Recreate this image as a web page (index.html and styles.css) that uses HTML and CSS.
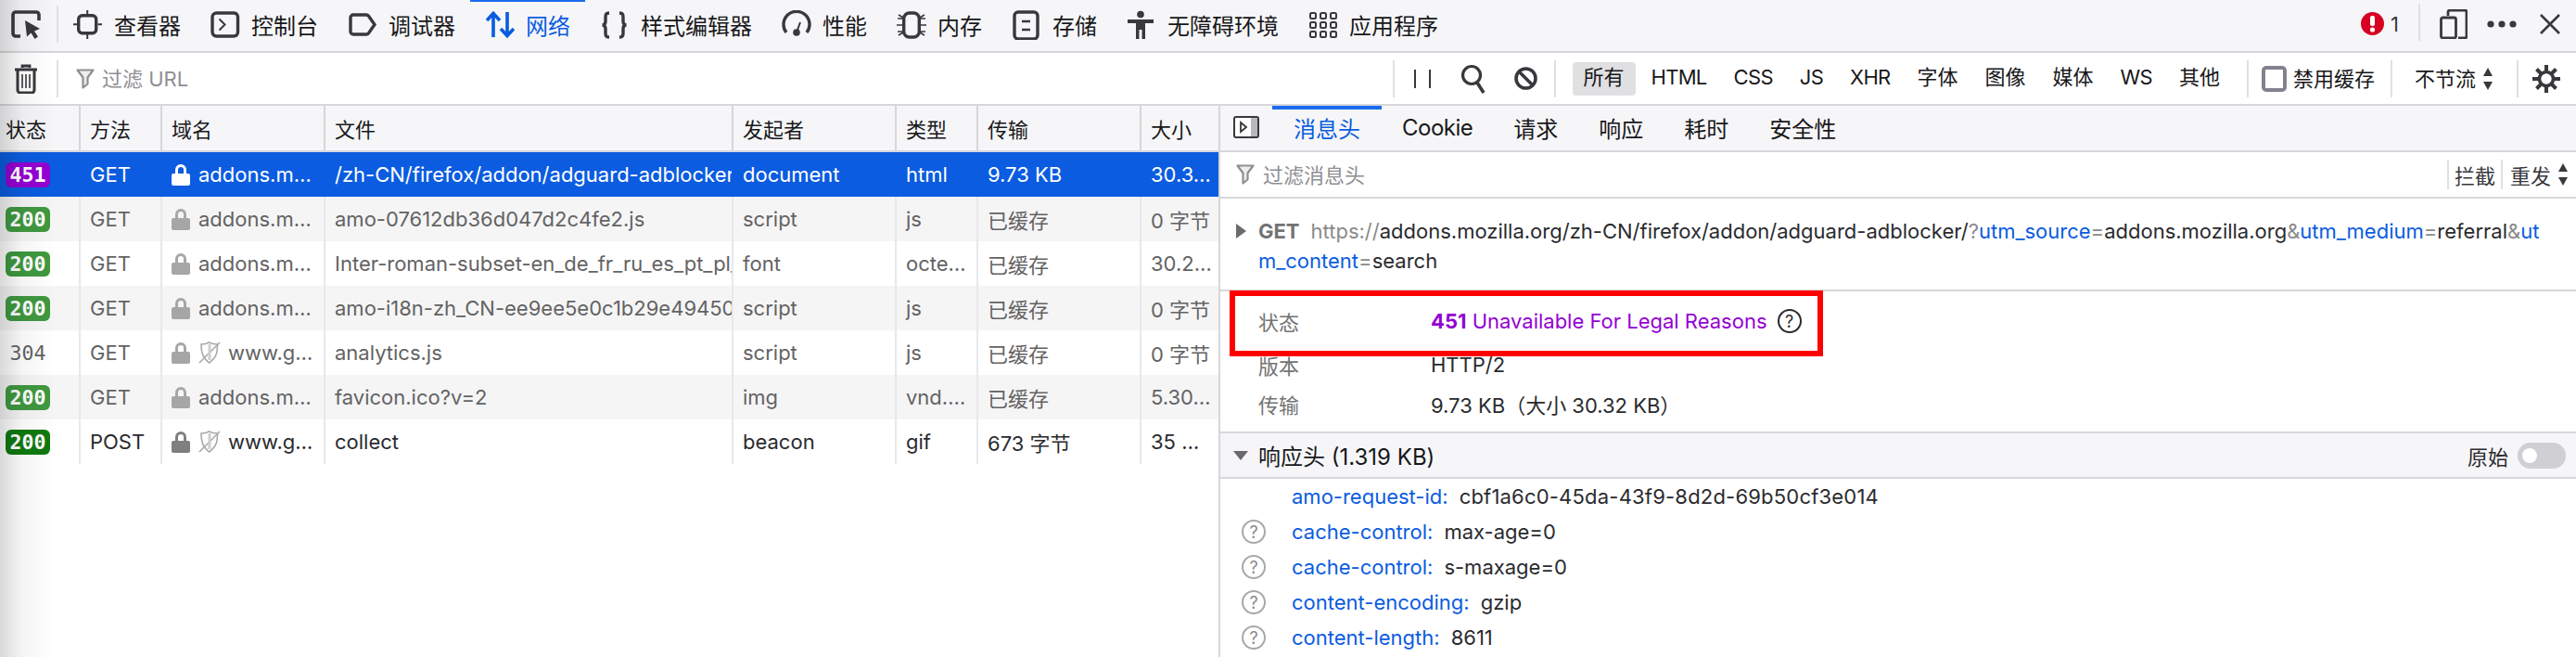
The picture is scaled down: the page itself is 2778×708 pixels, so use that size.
FILE: index.html
```html
<!DOCTYPE html>
<html lang="zh-CN">
<head>
<meta charset="utf-8">
<title>网络</title>
<link rel="stylesheet" href="styles.css">
</head>
<body>
<svg class="defs" aria-hidden="true">
  <symbol id="funnel" viewBox="0 0 20 22"><path d="M1.500 1.500h17l-6 8v7l-5 4v-11z" fill="#eeeeef" stroke="#8f8f93" stroke-width="2.200" stroke-linejoin="round"/></symbol>
  <symbol id="lock" viewBox="0 0 20 24"><path d="M2 11h16a2 2 0 0 1 2 2v9a2 2 0 0 1-2 2H2a2 2 0 0 1-2-2v-9a2 2 0 0 1 2-2zM4 11V7a6 6 0 0 1 12 0v4h-3V7a3 3 0 0 0-6 0v4z" fill="currentColor"/></symbol>
  <symbol id="shield" viewBox="0 0 24 24"><path d="M3 3c4 0 6-.5 8.500-2 2.500 1.500 5 2 9 2 0 8-.5 14-9 20C4 17 3 11 3 3z" fill="none" stroke="#a9a9a9" stroke-width="1.600"/><path d="M1 23L23 1" stroke="#a9a9a9" stroke-width="1.600"/><path d="M12 3v17" stroke="#cfcfcf" stroke-width="3"/></symbol>
  <symbol id="updown" viewBox="0 0 12 26"><path d="M6 1l5 9H1zM6 25l-5-9h10z" fill="#38383d"/></symbol>
</svg>

<div class="shade"></div>

<header class="bar top">
  <div class="picker">
    <svg class="ic32" viewBox="0 0 32 32"><path d="M10 29H5a3 3 0 0 1-3-3V6a3 3 0 0 1 3-3h22a3 3 0 0 1 3 3v6" fill="none" stroke="#38383d" stroke-width="3.600"/><path d="M15 12l16 9-6 2.500 4 6-3.500 2.500-4-6.500-4.500 4z" fill="#38383d"/></svg>
  </div>
  <span class="sep"></span>
  <nav class="tabs">
    <a class="tab"><svg class="ic32" viewBox="0 0 32 32"><rect x="5.700" y="5.700" width="19" height="19" rx="4" fill="none" stroke="#38383d" stroke-width="3.400"/><path d="M15.200 0v4M15.200 26v5M0 15.200h4M26.400 15.200H31" stroke="#38383d" stroke-width="2"/></svg>查看器</a>
    <a class="tab"><svg class="ic32" viewBox="0 0 32 32"><rect x="2" y="3" width="27.500" height="25" rx="4.500" fill="none" stroke="#38383d" stroke-width="3.400"/><path d="M9.500 9.500l6 6-6 6" fill="none" stroke="#38383d" stroke-width="2"/></svg>控制台</a>
    <a class="tab"><svg class="ic32" viewBox="0 0 32 32"><path d="M6 5h14a3 3 0 0 1 2.500 1.200L29 15.500l-6.500 9.300A3 3 0 0 1 20 26H6a3 3 0 0 1-3-3V8a3 3 0 0 1 3-3z" fill="none" stroke="#38383d" stroke-width="3.400"/></svg>调试器</a>
    <a class="tab on"><svg class="ic32" viewBox="0 0 32 32"><path d="M9 29V4M2 11l7-7.500 7 7.500M24 2v25M17 20l7 7.500 7-7.500" fill="none" stroke="#0a5ce0" stroke-width="3.600"/></svg>网络</a>
    <a class="tab"><svg class="ic32" viewBox="0 0 32 32"><path d="M10 3C6 3 6 5 6 8v4c0 2-1 4-3.500 4 2.500 0 3.500 2 3.500 4v4c0 3 0 5 4 5M21 3c4 0 4 2 4 5v4c0 2 1 4 3.500 4-2.500 0-3.500 2-3.500 4v4c0 3 0 5-4 5" fill="none" stroke="#38383d" stroke-width="3.400"/></svg>样式编辑器</a>
    <a class="tab"><svg class="ic32" viewBox="0 0 32 32"><path d="M5 24A14 14 0 1 1 27 24" fill="none" stroke="#38383d" stroke-width="3.400"/><circle cx="16" cy="24" r="3.800" fill="#38383d"/><path d="M16 24l4-11" stroke="#38383d" stroke-width="2"/></svg>性能</a>
    <a class="tab"><svg class="ic32" viewBox="0 0 32 32"><rect x="7.700" y="3" width="16.600" height="26" rx="6" fill="none" stroke="#38383d" stroke-width="3.400"/><path d="M1 9h6M0 16h7M1 23h6M25 9h6M25 16h7M25 23h6M2 5l5 3M2 27l5-3M30 5l-5 3M30 27l-5-3" stroke="#38383d" stroke-width="1.600"/></svg>内存</a>
    <a class="tab"><svg class="ic32" viewBox="0 0 32 32"><rect x="3" y="2" width="25" height="29" rx="4" fill="none" stroke="#38383d" stroke-width="3.400"/><path d="M11 12h9M11 21h9" stroke="#38383d" stroke-width="2.400"/></svg>存储</a>
    <a class="tab"><svg class="ic32" viewBox="0 0 32 32"><circle cx="15" cy="4.500" r="3.800" fill="#38383d"/><path d="M1 10h28v4h-9v17h-3.500v-10h-3v10H10V14H1z" fill="#38383d"/></svg>无障碍环境</a>
    <a class="tab"><svg class="ic32" viewBox="0 0 32 32"><g fill="none" stroke="#38383d" stroke-width="2"><rect x="2" y="3" width="6" height="6" rx="1.500"/><rect x="13" y="3" width="6" height="6" rx="1.500"/><rect x="24" y="3" width="6" height="6" rx="1.500"/><rect x="2" y="13" width="6" height="6" rx="1.500"/><rect x="13" y="13" width="6" height="6" rx="1.500"/><rect x="24" y="13" width="6" height="6" rx="1.500"/><rect x="2" y="23" width="6" height="6" rx="1.500"/><rect x="13" y="23" width="6" height="6" rx="1.500"/><rect x="24" y="23" width="6" height="6" rx="1.500"/></g></svg>应用程序</a>
  </nav>
  <div class="top-end">
    <svg class="err" viewBox="0 0 25 25"><circle cx="12.500" cy="12.500" r="12.500" fill="#d70022"/><rect x="10" y="4" width="5" height="11" rx="2" fill="#fff"/><circle cx="12.500" cy="19" r="2.600" fill="#fff"/></svg>
    <span class="errnum">1</span>
    <span class="sep"></span>
    <svg class="dev" viewBox="0 0 30 32"><path d="M9 7V3a2 2 0 0 1 2-2h16a2 2 0 0 1 2 2v26a2 2 0 0 1-2 2h-7" fill="none" stroke="#38383d" stroke-width="2.800"/><rect x="1.500" y="9" width="16" height="22" rx="2" fill="none" stroke="#38383d" stroke-width="2.800"/></svg>
    <svg class="dots" viewBox="0 0 32 8"><circle cx="4" cy="4" r="3.600" fill="#38383d"/><circle cx="16" cy="4" r="3.600" fill="#38383d"/><circle cx="28" cy="4" r="3.600" fill="#38383d"/></svg>
    <svg class="close" viewBox="0 0 22 22"><path d="M1 1l20 20M21 1L1 21" stroke="#38383d" stroke-width="2.600"/></svg>
  </div>
</header>

<div class="bar second">
  <div class="trash">
    <svg viewBox="0 0 26 32" width="26" height="32"><path d="M9 4V2h8v2M1 6h24" fill="none" stroke="#38383d" stroke-width="2.800"/><path d="M4 7v21a3 3 0 0 0 3 3h12a3 3 0 0 0 3-3V7" fill="none" stroke="#38383d" stroke-width="3"/><path d="M9 11v15M13 11v15M17 11v15" stroke="#38383d" stroke-width="1.600"/></svg>
  </div>
  <span class="sep"></span>
  <div class="filter url">
    <svg class="funnel"><use href="#funnel"/></svg><span class="lift">过滤 URL</span>
  </div>
  <span class="sep"></span>
  <div class="actions">
    <svg class="pause" viewBox="0 0 18 20"><path d="M1 0v20M17 0v20" stroke="#38383d" stroke-width="2"/></svg>
    <svg class="mag" viewBox="0 0 27 32"><circle cx="12" cy="12" r="9.500" fill="none" stroke="#38383d" stroke-width="3.200"/><path d="M18 20l7 11" stroke="#38383d" stroke-width="3.600"/></svg>
    <svg class="block" viewBox="0 0 25 25"><circle cx="12.500" cy="12.500" r="10.500" fill="none" stroke="#38383d" stroke-width="3.600"/><path d="M5 5l15 15" stroke="#38383d" stroke-width="3.600"/></svg>
  </div>
  <span class="sep"></span>
  <div class="types">
    <span class="type on">所有</span><span class="type lat">HTML</span><span class="type lat">CSS</span><span class="type lat">JS</span><span class="type lat">XHR</span><span class="type">字体</span><span class="type">图像</span><span class="type">媒体</span><span class="type lat">WS</span><span class="type">其他</span>
  </div>
  <span class="sep"></span>
  <label class="cache"><span class="box"></span><span class="lift">禁用缓存</span></label>
  <span class="sep"></span>
  <div class="throttle"><span class="lift">不节流</span><svg class="updown"><use href="#updown"/></svg></div>
  <span class="sep"></span>
  <svg class="gear" viewBox="0 0 32 32"><circle cx="16" cy="16" r="7.500" fill="none" stroke="#38383d" stroke-width="3.600"/><path d="M16 1v6M16 25v6M1 16h6M25 16h6M5.500 5.500l4.500 4.500M22 22l4.500 4.500M26.500 5.500L22 10M10 22l-4.500 4.500" stroke="#38383d" stroke-width="4"/></svg>
</div>

<main class="main">
  <section class="list">
    <div class="row head">
      <div class="cell">状态</div><div class="cell">方法</div><div class="cell">域名</div><div class="cell">文件</div><div class="cell">发起者</div><div class="cell">类型</div><div class="cell">传输</div><div class="cell">大小</div>
    </div>
    <div class="row sel">
      <div class="cell st"><span class="badge purple">451</span></div><div class="cell">GET</div><div class="cell dom"><svg class="lock"><use href="#lock"/></svg>addons.m…</div><div class="cell">/zh-CN/firefox/addon/adguard-adblocker/?utm_source=addons.mozilla.org</div><div class="cell">document</div><div class="cell">html</div><div class="cell">9.73 KB</div><div class="cell">30.3…</div>
    </div>
    <div class="row alt dim">
      <div class="cell st"><span class="badge green">200</span></div><div class="cell">GET</div><div class="cell dom"><svg class="lock"><use href="#lock"/></svg>addons.m…</div><div class="cell">amo-07612db36d047d2c4fe2.js</div><div class="cell">script</div><div class="cell">js</div><div class="cell">已缓存</div><div class="cell">0 字节</div>
    </div>
    <div class="row dim">
      <div class="cell st"><span class="badge green">200</span></div><div class="cell">GET</div><div class="cell dom"><svg class="lock"><use href="#lock"/></svg>addons.m…</div><div class="cell">Inter-roman-subset-en_de_fr_ru_es_pt_pl_.woff2</div><div class="cell">font</div><div class="cell">octe…</div><div class="cell">已缓存</div><div class="cell">30.2…</div>
    </div>
    <div class="row alt dim">
      <div class="cell st"><span class="badge green">200</span></div><div class="cell">GET</div><div class="cell dom"><svg class="lock"><use href="#lock"/></svg>addons.m…</div><div class="cell">amo-i18n-zh_CN-ee9ee5e0c1b29e494500.js</div><div class="cell">script</div><div class="cell">js</div><div class="cell">已缓存</div><div class="cell">0 字节</div>
    </div>
    <div class="row dim">
      <div class="cell st"><span class="plain">304</span></div><div class="cell">GET</div><div class="cell dom"><svg class="lock"><use href="#lock"/></svg><svg class="shield"><use href="#shield"/></svg>www.g…</div><div class="cell">analytics.js</div><div class="cell">script</div><div class="cell">js</div><div class="cell">已缓存</div><div class="cell">0 字节</div>
    </div>
    <div class="row alt dim">
      <div class="cell st"><span class="badge green">200</span></div><div class="cell">GET</div><div class="cell dom"><svg class="lock"><use href="#lock"/></svg>addons.m…</div><div class="cell">favicon.ico?v=2</div><div class="cell">img</div><div class="cell">vnd.…</div><div class="cell">已缓存</div><div class="cell">5.30…</div>
    </div>
    <div class="row last">
      <div class="cell st"><span class="badge dark">200</span></div><div class="cell">POST</div><div class="cell dom"><svg class="lock"><use href="#lock"/></svg><svg class="shield"><use href="#shield"/></svg>www.g…</div><div class="cell">collect</div><div class="cell">beacon</div><div class="cell">gif</div><div class="cell">673 字节</div><div class="cell">35 …</div>
    </div>
  </section>

  <section class="panel">
    <div class="ptabs">
      <svg class="toggle-side" viewBox="0 0 28 24"><rect x="1" y="1" width="26" height="22" rx="2" fill="#fff" stroke="#38383d" stroke-width="2"/><rect x="19" y="2" width="7" height="20" fill="#b8b8bc"/><path d="M8 7l6 5-6 5z" fill="none" stroke="#38383d" stroke-width="1.800"/></svg>
      <a class="ptab on">消息头</a><a class="ptab lat">Cookie</a><a class="ptab">请求</a><a class="ptab">响应</a><a class="ptab">耗时</a><a class="ptab">安全性</a>
    </div>
    <div class="pfilter">
      <div class="filter grow"><svg class="funnel"><use href="#funnel"/></svg><span class="lift-s">过滤消息头</span></div>
      <span class="sep short"></span><span class="pbtn">拦截</span><span class="sep short"></span><span class="pbtn">重发<svg class="updown"><use href="#updown"/></svg></span>
    </div>
    <div class="url-block">
      <span class="tri-right"></span>
      <p class="url-text"><b class="get">GET</b><span class="gray">https://</span>addons.mozilla.org/zh-CN/firefox/addon/adguard-adblocker/<span class="gray">?</span><span class="blue">utm_source</span><span class="gray">=</span>addons.mozilla.org<span class="gray">&amp;</span><span class="blue">utm_medium</span><span class="gray">=</span>referral<span class="gray">&amp;</span><span class="blue">ut<br>m_content</span><span class="gray">=</span>search</p>
    </div>
    <div class="summary">
      <div class="sum-row first"><span class="sum-key">状态</span><span class="status"><b>451</b> Unavailable For Legal Reasons</span><span class="help dark-help">?</span></div>
      <div class="sum-row"><span class="sum-key">版本</span><span>HTTP/2</span></div>
      <div class="sum-row"><span class="sum-key">传输</span><span>9.73 KB（大小 30.32 KB）</span></div>
      <div class="mark"></div>
    </div>
    <div class="sec-head">
      <span class="tri-down"></span><span class="sec-title">响应头 (1.319 KB)</span>
      <span class="raw">原始</span><span class="switch"><span class="knob"></span></span>
    </div>
    <div class="hdr"><span class="help empty"></span><span class="hname">amo-request-id:</span><span class="hval hash">cbf1a6c0-45da-43f9-8d2d-69b50cf3e014</span></div>
    <div class="hdr"><span class="help">?</span><span class="hname">cache-control:</span><span class="hval">max-age=0</span></div>
    <div class="hdr"><span class="help">?</span><span class="hname">cache-control:</span><span class="hval">s-maxage=0</span></div>
    <div class="hdr"><span class="help">?</span><span class="hname">content-encoding:</span><span class="hval">gzip</span></div>
    <div class="hdr"><span class="help">?</span><span class="hname">content-length:</span><span class="hval">8611</span></div>
  </section>
</main>
</body>
</html>
```
FILE: styles.css
```css
* { box-sizing: border-box; }
html, body { margin: 0; height: 708px; overflow: hidden; background: #fff; }
body {
  position: relative;
  font-family: Inter, "Noto Sans CJK SC", sans-serif;
  font-size: 22px;
  color: #2a2a2e;
}
.defs { position: absolute; width: 0; height: 0; }
.shade {
  position: absolute; left: 0; top: 0; bottom: 0; width: 60px; z-index: 5;
  pointer-events: none;
  background: linear-gradient(90deg, rgba(0,0,0,.15), rgba(0,0,0,.04) 40%, rgba(0,0,0,0));
}
.bar { display: flex; align-items: center; border-bottom: 2px solid #d7d7db; }
.sep { flex: none; width: 2px; height: 40px; background: #e0e0e2; }
.ic32 { flex: none; width: 32px; height: 32px; }
.lift { padding-bottom: 4px; }
.lift-s { padding-bottom: 2px; }

/* top toolbar */
.top { height: 57px; background: #f6f6f8; }
.top .sep { margin-bottom: 4px; }
.picker { width: 61px; padding: 0 0 4px 12px; display: flex; }
.tabs { display: flex; height: 100%; }
.tab {
  display: flex; align-items: center; gap: 12px;
  padding: 0 16px 4px 16px; font-size: 24px; color: #18181a;
  border-top: 2px solid transparent;
}
.tab.on { color: #0a5ce0; border-top-color: #1a6cf0; }
.top-end { margin-left: auto; display: flex; align-items: center; padding-bottom: 4px; }
.err { width: 25px; height: 25px; }
.errnum { margin: 0 21px 0 7px; color: #38383d; }
.dev { width: 30px; height: 32px; margin-left: 21px; }
.dots { width: 32px; height: 8px; margin-left: 21px; }
.close { width: 22px; height: 22px; margin: 0 17px 0 25px; }

/* second toolbar */
.second { height: 57px; background: #fff; }
.trash { width: 61px; padding-left: 15px; display: flex; }
.filter { display: flex; align-items: center; color: #8f8f93; }
.funnel { flex: none; width: 20px; height: 22px; }
.filter.url { flex: 1; padding-left: 19px; gap: 8px; }
.actions { display: flex; align-items: center; padding: 0 18px 0 21px; }
.pause { width: 18px; height: 20px; }
.mag { width: 27px; height: 32px; margin-left: 32px; }
.block { width: 25px; height: 25px; margin-left: 31px; }
.types { display: flex; gap: 5px; padding: 0 17px 0 18px; }
.type { padding: 0 12px 4px; height: 36px; line-height: 32px; border-radius: 4px; color: #18181a; }
.type.lat { letter-spacing: -.7px; }
.type.on { background: #e0e0e2; }
.cache { display: flex; align-items: center; gap: 7px; padding: 0 17px 0 14px; color: #18181a; }
.box { width: 27px; height: 28px; border: 4px solid #82828f; border-radius: 5px; background: #fff; }
.throttle { display: flex; align-items: center; gap: 7px; padding: 0 25px 0 24px; color: #18181a; }
.updown { width: 12px; height: 26px; flex: none; }
.gear { flex: none; width: 32px; height: 32px; margin: 0 16px 0 14px; }

/* layout below toolbars */
.main { display: flex; height: 594px; }
.list { flex: none; width: 1314px; }
.row {
  display: grid;
  grid-template-columns: 87px 88px 176px 440px 176px 88px 176px 83px;
  height: 48px; align-items: stretch;
}
.cell {
  display: flex; align-items: center; overflow: hidden; white-space: nowrap;
  padding-left: 10px; border-right: 2px solid #e8e8ec;
}
.cell:last-child { border-right: 0; }
.head { height: 50px; background: #f6f6f8; border-bottom: 2px solid #d7d7db; }
.head .cell { border-right-color: #d7d7db; color: #18181a; }
.head .cell:first-child { padding-left: 6px; }
.st { padding-left: 6px; }
.badge, .plain {
  font-family: "DejaVu Sans Mono", monospace; font-size: 21.500px; width: 48px; height: 27px;
  display: flex; align-items: center; justify-content: center; border-radius: 6px;
}
.badge { color: #fff; font-weight: 700; }
.purple { background: #9400d3; }
.green { background: #3f993f; }
.dark { background: #0f7a0f; }
.plain { color: #636363; font-weight: 400; }
.sel { background: #0b5ce0; color: #fff; }
.sel .cell { border-right-color: #0b5ce0; }
.alt { background: #f5f5f6; }
.dim { color: #636363; }
.lock { flex: none; width: 20px; height: 24px; margin-right: 9px; color: #a6a6a6; }
.sel .lock { color: #fff; }
.last .lock { color: #7f7f7f; }
.shield { flex: none; width: 24px; height: 24px; margin-right: 8px; }

/* side panel */
.panel { flex: 1; border-left: 2px solid #d7d7db; min-width: 0; }
.ptabs { display: flex; align-items: center; height: 50px; padding-bottom: 2px; background: #f6f6f8; border-bottom: 2px solid #d7d7db; }
.toggle-side { flex: none; width: 28px; height: 24px; margin: 0 14px 0 14px; }
.ptab { height: 100%; display: flex; align-items: center; padding: 0 22px 4px; font-size: 24px; color: #18181a; border-top: 4px solid transparent; }
.ptab.lat { letter-spacing: -.5px; }
.ptab.on { color: #0a5ce0; border-top-color: #1a6cf0; padding: 0 23px 4px; }
.pfilter { display: flex; align-items: center; height: 50px; border-bottom: 2px solid #d7d7db; padding: 0 8px 0 17px; }
.grow { flex: 1; gap: 9px; }
.sep.short { height: 32px; }
.pbtn { display: flex; align-items: center; gap: 7px; padding: 0 6px; color: #38383d; }
.pbtn:last-child { padding: 0 0 0 8px; }
.url-block { height: 100px; padding: 19px 0 0 17px; display: flex; border-bottom: 2px solid #d7d7db; }
.tri-right { flex: none; width: 0; height: 0; margin: 8px 13px 0 0; border-left: 11px solid #6a6a6f; border-top: 8px solid transparent; border-bottom: 8px solid transparent; }
.url-text { margin: 0; line-height: 32px; white-space: nowrap; color: #2a2a2e; }
.get { color: #737373; margin-right: 12px; }
.gray { color: #8a8a8a; }
.blue { color: #0a5ce0; }
.summary { position: relative; height: 153px; padding-top: 11px; border-bottom: 2px solid #d7d7db; }
.sum-row { display: flex; align-items: center; height: 42px; padding-left: 41px; color: #2a2a2e; }
.sum-row.first { margin-bottom: 5px; }
.sum-key { flex: none; width: 186px; color: #737373; }
.status { color: #9400d3; }
.mark { position: absolute; left: 10px; top: -1px; width: 640px; height: 71px; border: 6px solid #ff0000; }
.help {
  flex: none; width: 26px; height: 26px; border: 2.500px solid #a8a8a8; border-radius: 50%;
  display: flex; align-items: center; justify-content: center; font-size: 18px; color: #8a8a8a; margin: 0 28px 0 23px;
}
.help.empty { visibility: hidden; }
.dark-help { border-color: #2a2a2e; color: #2a2a2e; margin: 0 0 0 11px; }
.sec-head { display: flex; align-items: center; height: 49px; background: #f6f6f8; border-bottom: 2px solid #d7d7db; padding: 0 11px 0 14px; }
.tri-down { flex: none; width: 0; height: 0; border-top: 10px solid #6a6a6f; border-left: 8px solid transparent; border-right: 8px solid transparent; margin-right: 11px; }
.sec-title { flex: 1; color: #18181a; font-size: 24px; }
.raw { color: #2a2a2e; margin-right: 10px; }
.switch { width: 52px; height: 28px; border-radius: 14px; background: #cfcfd4; display: flex; align-items: center; padding-left: 5px; }
.knob { width: 16px; height: 16px; border-radius: 50%; background: #fff; }
.hdr { display: flex; align-items: center; height: 38px; }
.hdr:first-of-type { margin-top: 1px; }
.hname { color: #0a5ce0; margin-right: 12px; }
.hval { color: #2a2a2e; }
.hash { letter-spacing: .2px; }
```
